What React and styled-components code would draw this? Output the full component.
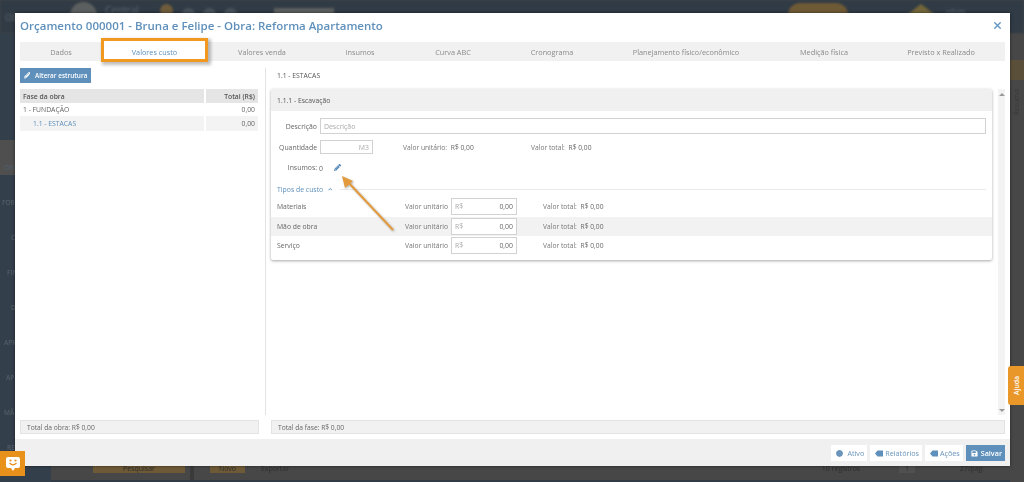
import React from "react";
import styled, { createGlobalStyle } from "styled-components";
import { FaPencilAlt, FaChevronUp, FaCircle, FaSave } from "react-icons/fa";
import { X } from "lucide-react";

const GlobalStyle = createGlobalStyle`
  html, body {
    margin: 0;
    padding: 0;
    width: 1024px;
    height: 482px;
    overflow: hidden;
    background: #474747;
    font-family: "Open Sans", "Liberation Sans", sans-serif;
  }
`;

const Page = styled.div`
  position: relative;
  width: 1024px;
  height: 482px;
  overflow: hidden;
  display: grid;
  grid-template-columns: 51px 1fr;
  grid-template-rows: 33px 1fr;
  background: #474747;
`;

/* dimmed app behind the modal */
const TopBar = styled.div`
  grid-column: 1 / 3;
  background: #303b45;
  display: flex;
  align-items: flex-start;
  filter: blur(0.8px);
`;

const TopShape = styled.div`
  flex: none;
  width: ${(p) => p.$w}px;
  height: ${(p) => p.$h}px;
  margin: ${(p) => p.$top}px 0 0 ${(p) => p.$ml}px;
  border-radius: ${(p) => p.$r || 0}px;
  background: ${(p) => p.$c};
  clip-path: ${(p) => (p.$house ? "polygon(50% 0, 100% 40%, 100% 100%, 0 100%, 0 40%)" : "none")};
`;

const TopText = styled.div`
  flex: none;
  width: ${(p) => p.$w}px;
  margin: ${(p) => p.$top}px 0 0 ${(p) => p.$ml}px;
  color: #5b6670;
  font-size: ${(p) => p.$size || 9}px;
  white-space: nowrap;
`;

const Side = styled.div`
  background: #333f4b;
  padding-top: 107px;
  display: flex;
  flex-direction: column;
  filter: blur(0.5px);
`;

const SideItem = styled.div`
  height: 35px;
  flex: none;
  box-sizing: border-box;
  padding: 0 0 3px ${(p) => p.$x}px;
  display: flex;
  align-items: flex-end;
  background: ${(p) => (p.$active ? "#4f4f4f" : "transparent")};
  color: #525d67;
  font-size: 6.5px;
  font-weight: 600;
`;

const Main = styled.div`
  display: flex;
  min-width: 0;
  background: #474747;
`;

const MainColumn = styled.div`
  flex: 1;
  display: flex;
  flex-direction: column;
  justify-content: flex-end;
`;

const BottomBar = styled.div`
  height: 15px;
  border-bottom: 2px solid #303b45;
  display: flex;
  align-items: flex-start;
  font-size: 7px;
  color: #2e2e2e;
  filter: blur(0.5px);
`;

const BottomItem = styled.div`
  flex: none;
  width: ${(p) => p.$w}px;
  height: ${(p) => p.$h || 8}px;
  margin-left: ${(p) => p.$ml}px;
  background: ${(p) => p.$c || "transparent"};
  display: flex;
  justify-content: center;
  white-space: nowrap;
  line-height: 8px;
`;

const RightStrip = styled.div`
  width: 14px;
  flex: none;
  padding-top: 27px;
  display: flex;
  flex-direction: column;
`;

const StripBand = styled.div`
  height: 20px;
  background: #5a5039;
`;

const StripText = styled.div`
  margin: 9px 0 0 2px;
  writing-mode: vertical-rl;
  transform: rotate(180deg);
  font-size: 7px;
  color: #383838;
  filter: blur(0.5px);
`;

const Modal = styled.div`
  position: absolute;
  left: 15px;
  top: 13px;
  width: 995px;
  height: 453px;
  background: #fff;
  display: flex;
  flex-direction: column;
  box-shadow: 0 0 3px rgba(0, 0, 0, 0.5);
  font-size: 7px;
  color: #666;
  filter: blur(0.3px);
`;

const ModalHead = styled.div`
  height: 29px;
  box-sizing: border-box;
  padding: 0 7px 5px 5px;
  display: flex;
  align-items: center;
  justify-content: space-between;
`;

const Title = styled.div`
  font-size: 11.5px;
  font-weight: 600;
  color: #5f90bb;
  white-space: nowrap;
`;

const CloseIcon = styled(X)`
  width: 11px;
  height: 11px;
  color: #5f95c4;
`;

const Tabs = styled.div`
  margin: 0 5px;
  height: 19px;
  background: #f1f1f1;
  display: grid;
  grid-template-columns: 82px 105px 110px 86px 100px 98px 170px 106px 1fr;
  align-items: center;
`;

const Tab = styled.div`
  position: relative;
  height: 100%;
  display: flex;
  align-items: center;
  justify-content: center;
  font-size: 7.3px;
  color: ${(p) => (p.$active ? "#5f90bb" : "#8a8a8a")};
  background: ${(p) => (p.$active ? "#fff" : "transparent")};
  white-space: nowrap;
  ${(p) =>
    p.$active &&
    `&::after {
       content: "";
       position: absolute;
       inset: -4px -1px -1px -1px;
       border: 3px solid #f0981f;
       box-shadow: 2px 2px 3px 1px rgba(0,0,0,.25);
     }`}
`;

const Body = styled.div`
  flex: 1;
  min-height: 0;
  display: grid;
  grid-template-columns: 238px 1fr;
  padding: 7px 5px 5px;
  column-gap: 7px;
`;

const Left = styled.div`
  display: flex;
  flex-direction: column;
`;

const Right = styled.div`
  border-left: 1px solid #e3e3e3;
  padding-left: 5px;
  display: flex;
  flex-direction: column;
  min-height: 0;
`;

const BlueButton = styled.button`
  align-self: flex-start;
  width: 71px;
  height: 15px;
  border: 0;
  padding: 0;
  background: #5f90bb;
  color: #fff;
  font: 600 6.4px "Open Sans", sans-serif;
  display: flex;
  align-items: center;
  justify-content: center;
  gap: 5px;
  svg {
    font-size: 6.5px;
  }
`;

const Grid = styled.div`
  margin-top: 6px;
  flex: 1;
`;

const GridRow = styled.div`
  display: grid;
  grid-template-columns: 184px 1fr;
  column-gap: 2px;
  height: ${(p) => p.$h}px;
  align-items: stretch;
  font-size: 6.8px;
  color: ${(p) => (p.$head ? "#555" : "#666")};
  font-weight: ${(p) => (p.$head ? 600 : 400)};
`;

const GridCell = styled.div`
  display: flex;
  align-items: center;
  justify-content: ${(p) => (p.$right ? "flex-end" : "flex-start")};
  padding: 0 3px 0 ${(p) => (p.$indent ? 13 : 3)}px;
  background: ${(p) => p.$bg || "transparent"};
  color: ${(p) => p.$color || "inherit"};
`;

const PhaseTitle = styled.div`
  height: 21px;
  box-sizing: border-box;
  padding: 0 0 6px 6px;
  flex: none;
  display: flex;
  align-items: center;
  font-size: 6.8px;
  color: #555;
`;

const RightInner = styled.div`
  flex: 1;
  display: grid;
  grid-template-columns: 721px 7px;
  column-gap: 6px;
  min-height: 0;
`;

const Card = styled.div`
  align-self: start;
  height: 171px;
  border-radius: 2px;
  box-shadow: 0 1px 3px rgba(0, 0, 0, 0.35);
  background: #fff;
  display: flex;
  flex-direction: column;
`;

const CardHead = styled.div`
  height: 22px;
  flex: none;
  background: #f0f0f0;
  display: flex;
  align-items: center;
  padding-left: 6px;
  font-size: 6.8px;
  color: #555;
`;

const CardBody = styled.div`
  padding: 7px 6px 0;
  display: flex;
  flex-direction: column;
`;

const FieldRow = styled.div`
  display: flex;
  align-items: center;
  height: ${(p) => p.$h}px;
  margin-top: ${(p) => p.$mt || 0}px;
`;

const FieldLabel = styled.div`
  width: 40px;
  text-align: right;
  margin-right: 3px;
  font-size: 6.9px;
  color: #666;
  white-space: nowrap;
`;

const TextBox = styled.div`
  height: ${(p) => p.$h}px;
  box-sizing: border-box;
  border: 1px solid #d2d2d2;
  display: flex;
  align-items: center;
  justify-content: space-between;
  padding: 0 3px;
  width: ${(p) => (p.$w ? `${p.$w}px` : "auto")};
  flex: ${(p) => (p.$w ? "none" : 1)};
  margin-right: ${(p) => p.$mr || 0}px;
  background: #fff;
  color: #aaa;
  font-size: 6.9px;
`;

const Amount = styled.span`
  color: #666;
`;

const ValueText = styled.div`
  width: ${(p) => p.$w}px;
  font-size: 6.7px;
  color: #777;
  white-space: nowrap;
  b {
    font-weight: 400;
    color: #666;
    margin-left: 2px;
  }
`;

const InsumosValue = styled.span`
  margin: 2px 11px 0 -1px;
  font-size: 6.9px;
  color: #666;
`;

const PencilIcon = styled(FaPencilAlt)`
  font-size: 7px;
  color: #4c82b5;
`;

const SectionTitle = styled.div`
  height: 16px;
  margin-top: 5px;
  display: flex;
  align-items: center;
  gap: 5px;
  font-size: 6.9px;
  color: #5f90bb;
  svg {
    font-size: 4.5px;
  }
  &::after {
    content: "";
    flex: 1;
    height: 1px;
    margin-left: 2px;
    background: #eaeaea;
  }
`;

const CostRow = styled.div`
  display: flex;
  align-items: center;
  height: 19.5px;
  margin: 0 -6px;
  padding: 0 6px;
  background: ${(p) => (p.$shade ? "#f2f2f2" : "transparent")};
  font-size: 6.8px;
  color: #666;
`;

const CostName = styled.div`
  width: 128px;
`;

const CostLabel = styled.div`
  width: 46px;
  color: #777;
`;

const Scrollbar = styled.div`
  background: #f3f3f3;
  display: flex;
  flex-direction: column;
  justify-content: space-between;
  align-items: center;
  padding: 4px 0 3px;
  &::before,
  &::after {
    content: "";
    border-left: 3px solid transparent;
    border-right: 3px solid transparent;
  }
  &::before {
    border-bottom: 3px solid #999;
  }
  &::after {
    border-top: 3px solid #999;
  }
`;

const Totals = styled.div`
  display: grid;
  grid-template-columns: 239px 1fr;
  column-gap: 12px;
  padding: 0 5px;
  margin-bottom: 5px;
`;

const TotalBox = styled.div`
  height: 14px;
  box-sizing: border-box;
  border: 1px solid #e3e3e3;
  background: #f1f1f1;
  display: flex;
  align-items: center;
  padding-left: 6px;
  font-size: 6.7px;
  color: #666;
`;

const Footer = styled.div`
  height: 27px;
  background: #f0f0f0;
  display: flex;
  align-items: center;
  justify-content: flex-end;
  gap: 3px;
  padding: 1px 5px 0 0;
  box-sizing: border-box;
`;

const FootButton = styled.div`
  height: 16px;
  display: flex;
  align-items: center;
  gap: ${(p) => p.$gap || 2}px;
  padding: 0 3px 0 5px;
  background: ${(p) => (p.$primary ? "#5f90bb" : "#fff")};
  color: ${(p) => (p.$primary ? "#fff" : "#6a94bb")};
  font-size: 7.2px;
  font-weight: ${(p) => (p.$primary ? 600 : 400)};
  svg {
    font-size: 7px;
  }
`;

const HelpTab = styled.div`
  position: absolute;
  right: 0;
  top: 366px;
  width: 16px;
  height: 39px;
  background: #ea972a;
  border-radius: 3px 0 0 3px;
  color: #fff;
  font-size: 6.8px;
  font-weight: 600;
  display: flex;
  align-items: center;
  justify-content: center;
  span {
    transform: rotate(-90deg);
  }
`;

const ChatBadge = styled.div`
  position: absolute;
  left: 0;
  top: 451px;
  width: 25px;
  height: 25px;
  background: #e8921b;
  display: flex;
  align-items: center;
  justify-content: center;
`;

const Arrow = styled.svg`
  position: absolute;
  left: 330px;
  top: 165px;
  width: 70px;
  height: 75px;
  filter: drop-shadow(1px 1px 1px rgba(0, 0, 0, 0.3));
`;

const TABS = [
  "Dados",
  "Valores custo",
  "Valores venda",
  "Insumos",
  "Curva ABC",
  "Cronograma",
  "Planejamento físico/econômico",
  "Medição física",
  "Previsto x Realizado",
];

const COSTS = ["Materiais", "Mão de obra", "Serviço"];

const SIDE_ITEMS = [
  { label: "ORC", x: 4, active: true },
  { label: "FOR", x: 2 },
  { label: "C", x: 11 },
  { label: "FIN", x: 7 },
  { label: "D", x: 11 },
  { label: "APR", x: 4 },
  { label: "AP", x: 6 },
  { label: "MÃ", x: 4 },
  { label: "RE", x: 7 },
];

const TagIcon = () => (
  <svg width="8" height="7" viewBox="0 0 8 7">
    <path d="M2.5 0.5 H8 V6.5 H2.5 L0 3.5 Z" fill="#5f90bb" />
  </svg>
);

export default function App() {
  return (
    <Page>
      <GlobalStyle />
      <TopBar>
        <TopText $w={20} $ml={5} $top={11}>OB</TopText>
        <TopShape $w={27} $h={27} $r={14} $ml={45} $top={2} $c="#5c5f5f" />
        <TopText $w={40} $ml={8} $top={3} $size={10}>Central</TopText>
        <TopShape $w={13} $h={13} $r={7} $ml={15} $top={4} $c="#6f5c3c" />
        <TopShape $w={13} $h={13} $r={7} $ml={9} $top={8} $c="#48525b" />
        <TopShape $w={13} $h={13} $r={7} $ml={8} $top={8} $c="#48525b" />
        <TopShape $w={13} $h={13} $r={7} $ml={8} $top={8} $c="#48525b" />
        <TopShape $w={60} $h={20} $ml={37} $top={8} $c="#5c5f5f" />
        <TopShape $w={60} $h={25} $r={12} $ml={454} $top={3} $c="#6f5a36" />
        <TopShape $house $w={26} $h={25} $ml={60} $top={4} $c="#73663a" />
        <TopText $w={40} $ml={12} $top={5}>ohm</TopText>
      </TopBar>
      <Side>
        {SIDE_ITEMS.map((s) => (
          <SideItem key={s.label} $x={s.x} $active={s.active}>
            {s.label}
          </SideItem>
        ))}
      </Side>
      <Main>
        <MainColumn>
          <BottomBar>
            <BottomItem $w={92} $ml={42} $c="#6e5a36">Pesquisar</BottomItem>
            <BottomItem $w={4} $h={15} $ml={5} $c="#3a3a3a" />
            <BottomItem $w={35} $ml={16} $c="#6e5a36">Novo</BottomItem>
            <BottomItem $w={40} $ml={10}>Exportar</BottomItem>
            <BottomItem $w={40} $ml={526}>10 registros</BottomItem>
            <BottomItem $w={16} $ml={38} $c="#505050">1</BottomItem>
            <BottomItem $w={30} $ml={42}>27/pag.</BottomItem>
          </BottomBar>
        </MainColumn>
        <RightStrip>
          <StripBand />
          <StripText>Resumo</StripText>
        </RightStrip>
      </Main>
      <Modal>
        <ModalHead>
          <Title>Orçamento 000001 - Bruna e Felipe - Obra: Reforma Apartamento</Title>
          <CloseIcon strokeWidth={3} />
        </ModalHead>
        <Tabs>
          {TABS.map((t, i) => (
            <Tab key={t} $active={i === 1}>
              {t}
            </Tab>
          ))}
        </Tabs>
        <Body>
          <Left>
            <BlueButton>
              <FaPencilAlt />
              Alterar estrutura
            </BlueButton>
            <Grid>
              <GridRow $head $h={14}>
                <GridCell $bg="#e5e5e5">Fase da obra</GridCell>
                <GridCell $bg="#e5e5e5" $right>
                  Total (R$)
                </GridCell>
              </GridRow>
              <GridRow $h={13}>
                <GridCell>1 - FUNDAÇÃO</GridCell>
                <GridCell $right>0,00</GridCell>
              </GridRow>
              <GridRow $h={15}>
                <GridCell $indent $bg="#f3f3f3" $color="#5f90bb">
                  1.1 - ESTACAS
                </GridCell>
                <GridCell $bg="#f3f3f3" $right>
                  0,00
                </GridCell>
              </GridRow>
            </Grid>
          </Left>
          <Right>
            <PhaseTitle>1.1 - ESTACAS</PhaseTitle>
            <RightInner>
              <Card>
                <CardHead>1.1.1 - Escavação</CardHead>
                <CardBody>
                  <FieldRow $h={16}>
                    <FieldLabel>Descrição</FieldLabel>
                    <TextBox $h={16}>Descrição</TextBox>
                  </FieldRow>
                  <FieldRow $h={14} $mt={6}>
                    <FieldLabel>Quantidade</FieldLabel>
                    <TextBox $h={14} $w={53} $mr={30}>
                      <span />
                      M3
                    </TextBox>
                    <ValueText $w={128}>
                      Valor unitário: <b>R$ 0,00</b>
                    </ValueText>
                    <ValueText $w={100}>
                      Valor total: <b>R$ 0,00</b>
                    </ValueText>
                  </FieldRow>
                  <FieldRow $h={18} $mt={4}>
                    <FieldLabel>Insumos:</FieldLabel>
                    <InsumosValue>0</InsumosValue>
                    <PencilIcon />
                  </FieldRow>
                  <SectionTitle>
                    Tipos de custo <FaChevronUp />
                  </SectionTitle>
                  {COSTS.map((c, i) => (
                    <CostRow key={c} $shade={i === 1}>
                      <CostName>{c}</CostName>
                      <CostLabel>Valor unitário</CostLabel>
                      <TextBox $h={17} $w={66} $mr={26}>
                        R$
                        <Amount>0,00</Amount>
                      </TextBox>
                      <ValueText $w={100}>
                        Valor total: <b>R$ 0,00</b>
                      </ValueText>
                    </CostRow>
                  ))}
                </CardBody>
              </Card>
              <Scrollbar />
            </RightInner>
          </Right>
        </Body>
        <Totals>
          <TotalBox>Total da obra: R$ 0,00</TotalBox>
          <TotalBox>Total da fase: R$ 0,00</TotalBox>
        </Totals>
        <Footer>
          <FootButton $gap={4}>
            <FaCircle />
            Ativo
          </FootButton>
          <FootButton>
            <TagIcon />
            Relatórios
          </FootButton>
          <FootButton>
            <TagIcon />
            Ações
          </FootButton>
          <FootButton $primary $gap={3}>
            <FaSave />
            Salvar
          </FootButton>
        </Footer>
      </Modal>
      <Arrow viewBox="0 0 70 75">
        <path d="M63 65 L17 16" stroke="#e39a3c" strokeWidth="2" fill="none" />
        <path d="M12 11 L23 16 L15 23 Z" fill="#e39a3c" />
      </Arrow>
      <HelpTab>
        <span>Ajuda</span>
      </HelpTab>
      <ChatBadge>
        <svg width="16" height="16" viewBox="0 0 16 16">
          <path d="M3 1 H13 Q15 1 15 3 V10 Q15 12 13 12 H10 L8 15 L6 12 H3 Q1 12 1 10 V3 Q1 1 3 1 Z" fill="#fff" />
          <circle cx="5.5" cy="4.5" r="1.1" fill="#e8921b" />
          <circle cx="10.5" cy="4.5" r="1.1" fill="#e8921b" />
          <path d="M4.5 7 Q8 10.5 11.5 7" stroke="#e8921b" strokeWidth="1.2" fill="none" />
        </svg>
      </ChatBadge>
    </Page>
  );
}
